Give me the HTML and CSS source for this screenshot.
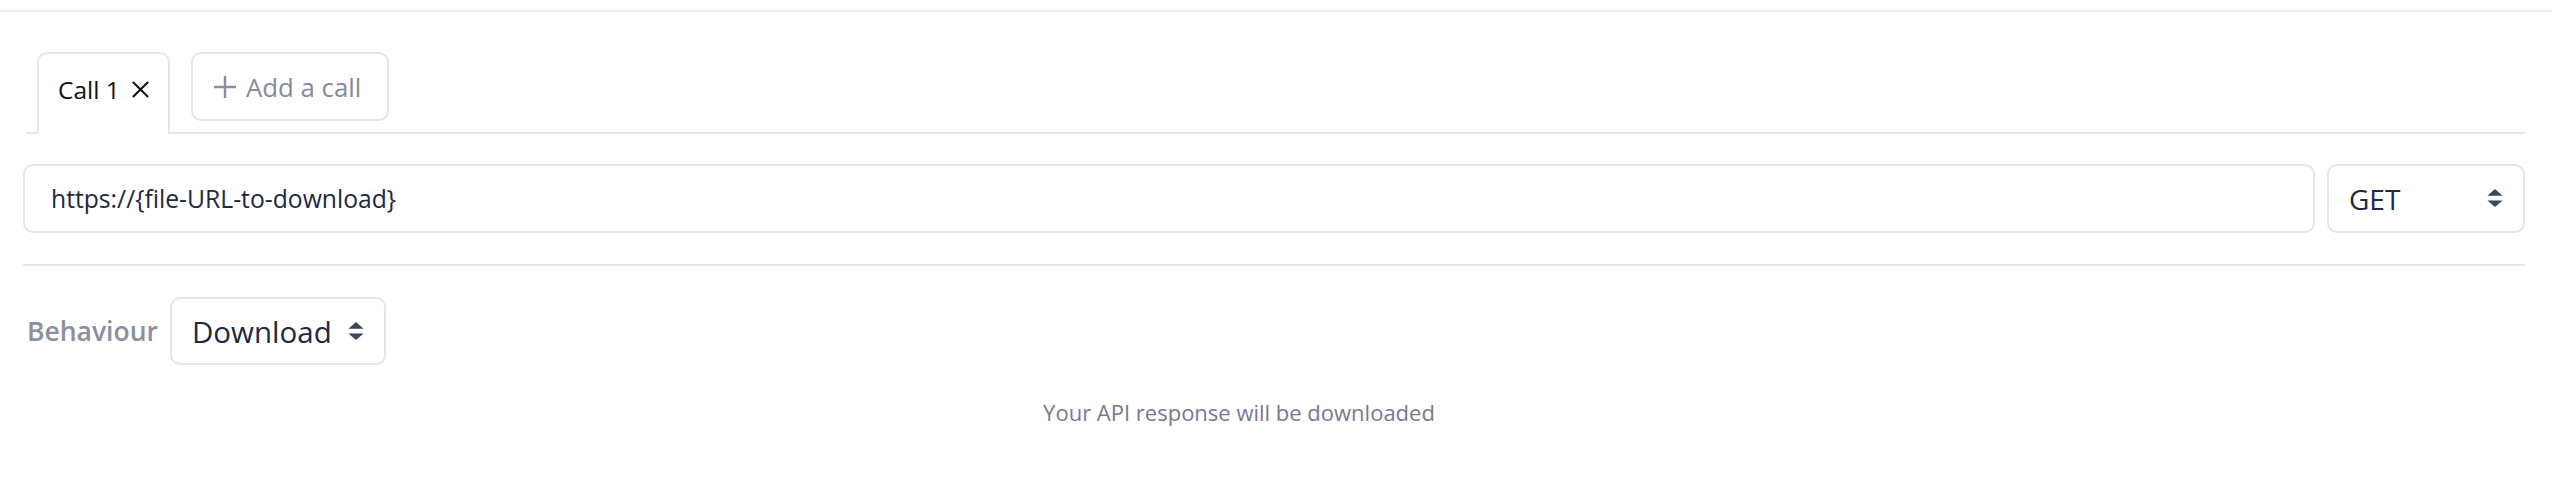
FILE: index.html
```html
<!DOCTYPE html>
<html>
<head>
<meta charset="utf-8">
<link rel="stylesheet" href="styles.css">
</head>
<body>
<div class="page">
  <div class="top-rule"></div>
  <div class="content">
    <div class="tabs">
      <div class="tab">
        <span>Call 1</span>
        <svg class="x-icon" width="20" height="20" viewBox="0 0 20 20"><path d="M2 2 L18 18 M18 2 L2 18" stroke="#111" stroke-width="2.2" fill="none"/></svg>
      </div>
      <div class="add-btn">
        <svg class="plus-icon" width="24" height="24" viewBox="0 0 24 24"><path d="M12 1 V23 M1 12 H23" stroke="#8a8e9c" stroke-width="2.4" fill="none"/></svg>
        <span>Add a call</span>
      </div>
    </div>
    <div class="url-row">
      <div class="url-input">https://{file-URL-to-download}</div>
      <div class="select method">
        <span>GET</span>
        <svg class="arrows" width="16" height="20" viewBox="0 0 16 20"><path d="M8 0 L16 7 H0 Z M0 12 H16 L8 19 Z" fill="#3c4661"/></svg>
      </div>
    </div>
    <div class="divider"></div>
    <div class="behaviour-row">
      <span class="label">Behaviour</span>
      <div class="select behaviour">
        <span>Download</span>
        <svg class="arrows" width="16" height="20" viewBox="0 0 16 20"><path d="M8 0 L16 7 H0 Z M0 12 H16 L8 19 Z" fill="#3c4661"/></svg>
      </div>
    </div>
    <p class="note">Your API response will be downloaded</p>
  </div>
</div>
</body>
</html>
```
FILE: styles.css
```css
* { box-sizing: border-box; }
html, body { margin: 0; padding: 0; background: #ffffff; }
body { font-family: "Open Sans", "DejaVu Sans", sans-serif; }
.page { padding-top: 10px; }
.top-rule { border-top: 2px solid #ebebeb; }
.content { padding: 0 27px 0 23px; }
.tabs {
  display: flex;
  align-items: flex-start;
  gap: 21px;
  margin: 40px 0 0 3px;
  padding-left: 11px;
  border-bottom: 2px solid #e6e6e6;
}
.tab {
  display: flex;
  align-items: center;
  gap: 11px;
  width: 133px;
  height: 82px;
  margin-bottom: -2px;
  padding: 0 0 10px 19px;
  border: 2px solid #e6e6e6;
  border-bottom: none;
  border-radius: 10px 10px 0 0;
  background: #fff;
  font-size: 24.5px;
  color: #111111;
}
.x-icon { width: 19px; height: 19px; }
.add-btn {
  display: flex;
  align-items: center;
  gap: 9px;
  width: 198px;
  height: 69px;
  padding-left: 20px;
  border: 2px solid #e6e6e6;
  border-radius: 10px;
  font-size: 25.8px;
  color: #868a9a;
}
.plus-icon { width: 24px; height: 24px; }
.url-row {
  display: flex;
  gap: 12px;
  margin-top: 30px;
}
.url-input {
  flex: 1;
  height: 69px;
  display: flex;
  align-items: center;
  padding-left: 26px;
  border: 2px solid #e6e6e6;
  border-radius: 10px;
  font-size: 24.7px;
  color: #1e2944;
}
.select {
  display: flex;
  align-items: center;
  justify-content: space-between;
  border: 2px solid #e6e6e6;
  border-radius: 10px;
  color: #1e2944;
}
.method {
  width: 198px;
  height: 69px;
  padding: 0 20px 0 20px;
  font-size: 28px;
}
.arrows { width: 16px; height: 19px; }
.divider {
  margin-top: 31px;
  border-top: 2px solid #e6e6e6;
}
.behaviour-row {
  display: flex;
  align-items: center;
  gap: 12px;
  margin-top: 31px;
  padding-left: 4px;
}
.label {
  font-size: 26.5px;
  font-weight: 600;
  color: #8a8fa2;
}
.behaviour {
  width: 216px;
  height: 68px;
  padding: 0 20px 0 20px;
  font-size: 29.5px;
}
.note {
  margin: 32px 0 0 0;
  padding-right: 70px;
  text-align: center;
  font-size: 22px;
  color: #737b93;
}
```
